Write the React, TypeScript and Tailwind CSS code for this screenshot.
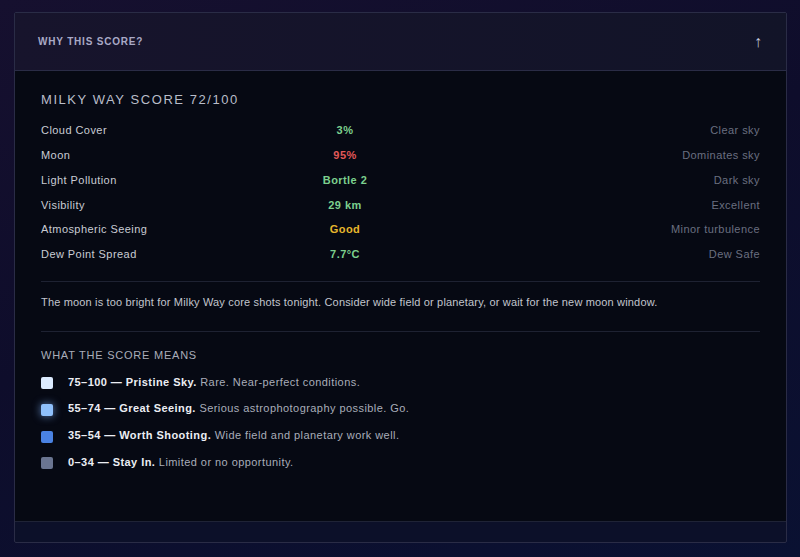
const rows = [
  { label: 'Cloud Cover', value: '3%', tone: 'text-[#7cd08e]', note: 'Clear sky' },
  { label: 'Moon', value: '95%', tone: 'text-[#e25858]', note: 'Dominates sky' },
  { label: 'Light Pollution', value: 'Bortle 2', tone: 'text-[#7cd08e]', note: 'Dark sky' },
  { label: 'Visibility', value: '29 km', tone: 'text-[#7cd08e]', note: 'Excellent' },
  { label: 'Atmospheric Seeing', value: 'Good', tone: 'text-[#e6b72c]', note: 'Minor turbulence' },
  { label: 'Dew Point Spread', value: '7.7°C', tone: 'text-[#7cd08e]', note: 'Dew Safe' },
]

const legend = [
  {
    swatch: 'bg-[#dcebff]',
    range: '75–100',
    name: 'Pristine Sky.',
    text: 'Rare. Near-perfect conditions.',
  },
  {
    swatch: 'bg-[#8fc0fb] shadow-[0_0_8px_rgba(130,180,255,0.7)]',
    range: '55–74',
    name: 'Great Seeing.',
    text: 'Serious astrophotography possible. Go.',
  },
  {
    swatch: 'bg-[#4a82e2]',
    range: '35–54',
    name: 'Worth Shooting.',
    text: 'Wide field and planetary work well.',
  },
  {
    swatch: 'bg-[#6a7591]',
    range: '0–34',
    name: 'Stay In.',
    text: 'Limited or no opportunity.',
  },
]

export default function App() {
  return (
    <div
      className="min-h-screen bg-[linear-gradient(160deg,#16102f_0%,#0e0d2b_45%,#0a1132_100%)] pt-[12px] pl-[14px] pr-[13px] pb-[15px]"
      style={{ fontFamily: '"Liberation Sans", Arial, sans-serif' }}
    >
      <div className="border border-[#2a2c46] rounded-[2px] bg-[#0c1029]">
        <header className="h-[58px] flex items-center justify-between pl-[23px] pr-[24px] border-b border-[#2a2c46] bg-[linear-gradient(90deg,#17142c,#121428)]">
          <span className="text-[10px] font-bold tracking-[0.08em] text-[#a9a9c6]">WHY THIS SCORE?</span>
          <span className="text-[16px] leading-none text-[#c4c8dc]">↑</span>
        </header>

        <div className="bg-[#060913] border-b border-[#1f2336] px-[26px] pt-[21px] pb-[49px]">
          <h2 className="text-[13px] leading-[16px] tracking-[0.12em] text-[#b9bdc9] mb-[10px]">MILKY WAY SCORE 72/100</h2>

          <div>
            {rows.map((r) => (
              <div key={r.label} className="grid grid-cols-[240px_128px_1fr] items-center h-[24.8px] text-[11px] tracking-[0.04em]">
                <span className="text-[#c9ccd4]">{r.label}</span>
                <span className={`text-center font-semibold ${r.tone}`}>{r.value}</span>
                <span className="text-right text-[#6a6f80]">{r.note}</span>
              </div>
            ))}
          </div>

          <div className="mt-[14px] border-t border-[#1e2232]" />
          <p className="pt-[12px] pb-[21px] text-[11px] leading-[16px] tracking-[0.015em] text-[#c2c5cd]">
            The moon is too bright for Milky Way core shots tonight. Consider wide field or planetary, or wait for the new moon window.
          </p>
          <div className="border-t border-[#1e2232]" />

          <h3 className="mt-[15px] text-[11px] leading-[16px] tracking-[0.07em] text-[#a9adb9] mb-[9px]">WHAT THE SCORE MEANS</h3>

          <ul className="flex flex-col gap-[6.7px]">
            {legend.map((l) => (
              <li key={l.range} className="flex items-center h-[20px] text-[11px] tracking-[0.04em]">
                <span className={`w-[12px] h-[12px] rounded-[2px] mt-[3px] shrink-0 ${l.swatch}`} />
                <span className="ml-[15px]">
                  <span className="font-bold text-[#eceef3]">
                    {l.range} — {l.name}
                  </span>{' '}
                  <span className="text-[#a9adb9]">{l.text}</span>
                </span>
              </li>
            ))}
          </ul>
        </div>

        <div className="h-[20px]" />
      </div>
    </div>
  )
}
